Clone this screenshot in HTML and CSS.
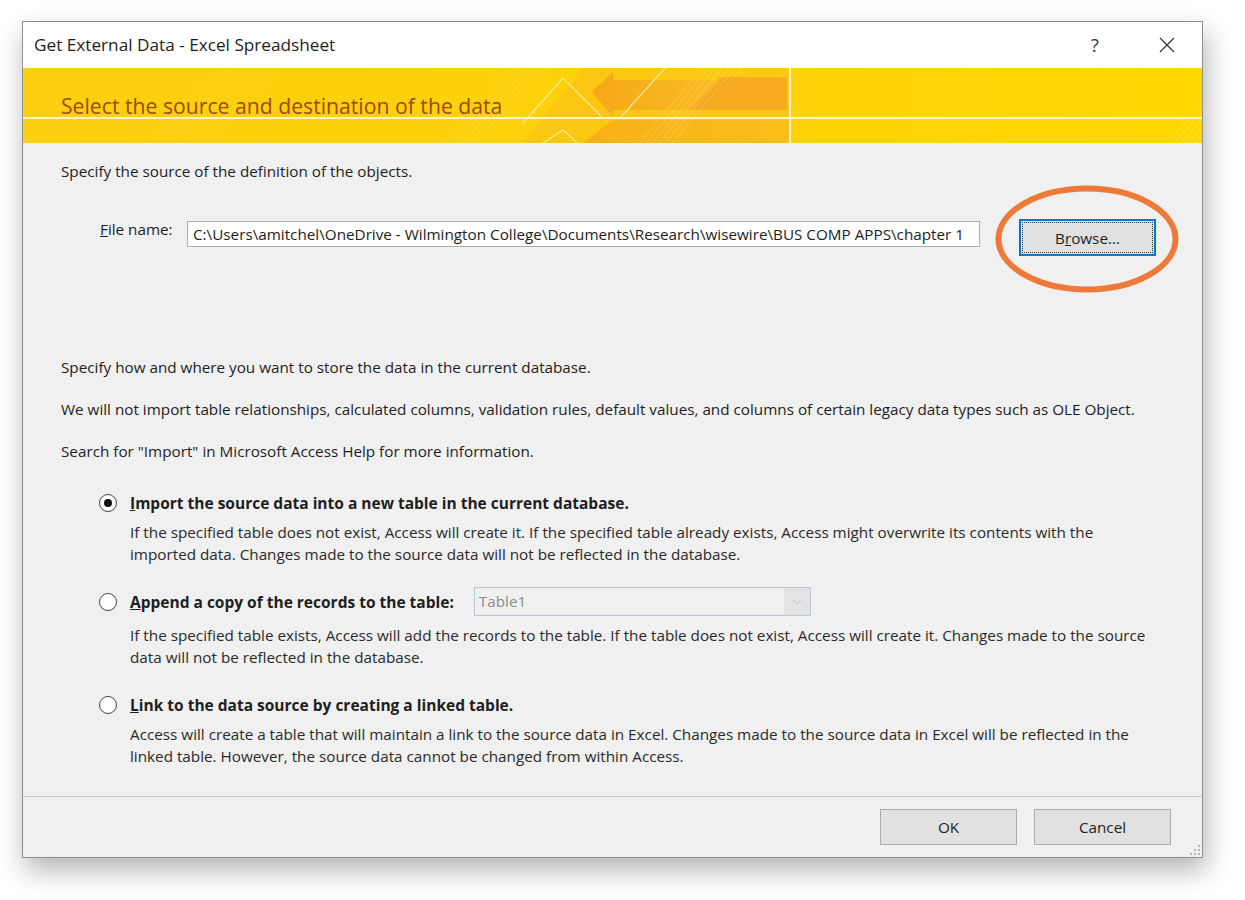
FILE: index.html
```html
<!DOCTYPE html>
<html lang="en">

<head>
  <meta charset="UTF-8">
  <title>Get External Data - Excel Spreadsheet</title>
  <link rel="stylesheet" href="styles.css">
</head>

<body>
  <div class="dialog">
    <div class="titlebar">
      <span class="title">Get External Data - Excel Spreadsheet</span>
      <div class="title-buttons">
        <span class="help">?</span>
        <span class="close">
          <svg width="16" height="16" viewBox="0 0 16 16"><path d="M1 1L15 15M15 1L1 15" stroke="#333" stroke-width="1.2" fill="none"/></svg>
        </span>
      </div>
    </div>

    <div class="banner">
      <svg class="banner-art" viewBox="0 0 1179 75" preserveAspectRatio="none">
        <defs>
          <linearGradient id="bannerBg" x1="0" x2="1" y1="0" y2="0">
            <stop offset="0" stop-color="#fccf10"/>
            <stop offset="0.5" stop-color="#fdd10a"/>
            <stop offset="1" stop-color="#ffd700"/>
          </linearGradient>
          <linearGradient id="orange" x1="0" x2="1" y1="0" y2="0">
            <stop offset="0" stop-color="#f5a01c"/>
            <stop offset="1" stop-color="#f9b825"/>
          </linearGradient>
          <pattern id="hatch" width="5" height="5" patternUnits="userSpaceOnUse" patternTransform="rotate(40)">
            <line x1="0" y1="0" x2="0" y2="5" stroke="#fff" stroke-width="1"/>
          </pattern>
        </defs>
        <rect width="1179" height="75" fill="url(#bannerBg)"/>
        <polygon points="120,75 190,0 260,0 190,75" fill="url(#hatch)" opacity="0.12"/>
        <polygon points="420,75 490,0 530,0 460,75" fill="url(#hatch)" opacity="0.25"/>
        <polygon points="500,75 560,0 767,0 767,75" fill="#f9bd1c" opacity="0.5"/>
        <polygon points="569,24 590,4 590,12 690,12 690,42 590,42 590,49" fill="url(#orange)" opacity="0.8"/>
        <polygon points="667,42 697,9 764,9 764,42" fill="#f5a722" opacity="0.9"/>
        <polygon points="560,75 590,52 767,52 767,75" fill="url(#orange)" opacity="0.6"/>
        <polygon points="610,75 680,0 720,0 650,75" fill="url(#hatch)" opacity="0.35"/>
        <polygon points="1140,75 1179,30 1179,75" fill="url(#hatch)" opacity="0.35"/>
        <g stroke="#fff3b0" stroke-width="1.2" fill="none" opacity="0.85">
          <polyline points="500,55 540,10 580,50"/>
          <line x1="597" y1="50" x2="642" y2="0"/>
          <polyline points="520,75 540,62 554,75"/>
        </g>
        <line x1="0" y1="50" x2="1179" y2="50" stroke="#fff6c4" stroke-width="2"/>
        <line x1="767" y1="0" x2="767" y2="75" stroke="#fff6c4" stroke-width="2"/>
      </svg>
      <h1 class="banner-title">Select the source and destination of the data</h1>
    </div>

    <div class="content">
      <p class="line">Specify the source of the definition of the objects.</p>

      <div class="file-row">
        <label class="file-label"><u>F</u>ile name:</label>
        <div class="file-input">C:\Users\amitchel\OneDrive - Wilmington College\Documents\Research\wisewire\BUS COMP APPS\chapter 1</div>
        <div class="browse-wrap">
          <button class="btn btn-browse">B<u>r</u>owse...</button>
          <svg class="ring" width="190" height="114" viewBox="0 0 190 114">
            <ellipse cx="95" cy="57" rx="88.5" ry="50.5" fill="none" stroke="#ee7a3a" stroke-width="6"/>
          </svg>
        </div>
      </div>

      <p class="line gap-large">Specify how and where you want to store the data in the current database.</p>
      <p class="line gap">We will not import table relationships, calculated columns, validation rules, default values, and columns of certain legacy data types such as OLE Object.</p>
      <p class="line gap">Search for "Import" in Microsoft Access Help for more information.</p>

      <div class="options">
        <div class="option">
          <div class="option-row">
            <span class="radio checked"></span>
            <span class="option-label"><u>I</u>mport the source data into a new table in the current database.</span>
          </div>
          <p class="option-desc">If the specified table does not exist, Access will create it. If the specified table already exists, Access might overwrite its contents with the<br>imported data. Changes made to the source data will not be reflected in the database.</p>
        </div>

        <div class="option">
          <div class="option-row">
            <span class="radio"></span>
            <span class="option-label"><u>A</u>ppend a copy of the records to the table:</span>
            <div class="combo">
              <span class="combo-text">Table1</span>
              <span class="combo-arrow">
                <svg width="10" height="6" viewBox="0 0 10 6"><path d="M1 1L5 5L9 1" stroke="#c4c4c4" stroke-width="1" fill="none"/></svg>
              </span>
            </div>
          </div>
          <p class="option-desc desc-wide">If the specified table exists, Access will add the records to the table. If the table does not exist, Access will create it. Changes made to the source<br>data will not be reflected in the database.</p>
        </div>

        <div class="option">
          <div class="option-row">
            <span class="radio"></span>
            <span class="option-label"><u>L</u>ink to the data source by creating a linked table.</span>
          </div>
          <p class="option-desc">Access will create a table that will maintain a link to the source data in Excel. Changes made to the source data in Excel will be reflected in the<br>linked table. However, the source data cannot be changed from within Access.</p>
        </div>
      </div>
    </div>

    <div class="footer">
      <button class="btn">OK</button>
      <button class="btn">Cancel</button>
      <svg class="grip" width="12" height="12" viewBox="0 0 12 12">
        <g fill="#b8b8b8">
          <rect x="9" y="1" width="2" height="2"/>
          <rect x="5" y="5" width="2" height="2"/><rect x="9" y="5" width="2" height="2"/>
          <rect x="1" y="9" width="2" height="2"/><rect x="5" y="9" width="2" height="2"/><rect x="9" y="9" width="2" height="2"/>
        </g>
      </svg>
    </div>
  </div>
</body>

</html>
```

FILE: styles.css
```css
body {
  margin: 0;
  min-height: 900px;
  background: #fff;
  font-family: "Open Sans", "Noto Sans", sans-serif;
  color: #1e1e1e;
}

.dialog {
  box-sizing: border-box;
  width: 1181px;
  height: 837px;
  margin: 21px 0 0 22px;
  border: 1px solid #8f8f8f;
  background: #f0f0f0;
  display: flex;
  flex-direction: column;
  box-shadow: 3px 12px 26px rgba(0, 0, 0, 0.3);
}

.titlebar {
  height: 46px;
  flex: none;
  background: #fff;
  display: flex;
  align-items: center;
  justify-content: space-between;
  padding-left: 11px;
}

.title {
  font-size: 17.2px;
  margin-top: -1px;
}

.title-buttons {
  display: flex;
  align-items: center;
}

.help {
  width: 46px;
  text-align: center;
  font-size: 18px;
  color: #333;
}

.close {
  width: 46px;
  margin: 0 12px 0 26px;
  display: flex;
  justify-content: center;
}

.banner {
  height: 75px;
  flex: none;
  position: relative;
  overflow: hidden;
}

.banner-art {
  position: absolute;
  left: 0;
  top: 0;
  width: 100%;
  height: 100%;
}

.banner-title {
  position: relative;
  margin: 0;
  padding: 24px 0 0 38px;
  font-size: 21.2px;
  font-weight: normal;
  line-height: 28px;
  color: #9c4a0c;
}

.content {
  flex: 1;
  padding: 18px 38px 0;
  font-size: 15.25px;
}

.line {
  margin: 0;
  line-height: 20px;
  white-space: nowrap;
}

.gap {
  margin-top: 22px;
}

.gap-large {
  margin-top: 101px;
}

.file-row {
  display: flex;
  align-items: flex-start;
  margin: 38px 0 0 39px;
}

.file-label {
  width: 87px;
  line-height: 20px;
}

.file-input {
  box-sizing: border-box;
  width: 793px;
  height: 26px;
  margin-top: 2px;
  padding: 0 5px;
  background: #fff;
  border: 1px solid #adadad;
  line-height: 24px;
  white-space: nowrap;
  overflow: hidden;
}

.browse-wrap {
  position: relative;
  margin-left: 39px;
}

.btn {
  box-sizing: border-box;
  width: 137px;
  height: 36px;
  background: #e1e1e1;
  border: 1px solid #adadad;
  font-family: inherit;
  font-size: 15.25px;
  color: #1e1e1e;
  padding: 0;
}

.btn-browse {
  height: 37px;
  border: 2px solid #0078d7;
  outline: 1px dotted #333;
  outline-offset: -4px;
}

.ring {
  position: absolute;
  left: -27px;
  top: -37px;
  pointer-events: none;
}

.options {
  margin-top: 27px;
}

.option + .option {
  margin-top: 22px;
}

.option-row {
  display: flex;
  align-items: center;
  height: 29px;
  padding-left: 38px;
}

.radio {
  box-sizing: border-box;
  width: 18px;
  height: 18px;
  border: 1px solid #444;
  border-radius: 50%;
  background: #fff;
  display: flex;
  align-items: center;
  justify-content: center;
}

.radio.checked::after {
  content: "";
  width: 8px;
  height: 8px;
  border-radius: 50%;
  background: #111;
}

.option-label {
  margin-left: 13px;
  font-size: 15.5px;
  font-weight: bold;
}

.combo {
  box-sizing: border-box;
  display: flex;
  width: 337px;
  height: 29px;
  margin-left: 20px;
  border: 1px solid #bcc7d5;
  background: #f0f0f0;
}

.combo-text {
  flex: 1;
  padding-left: 4px;
  line-height: 27px;
  color: #8c8c8c;
}

.combo-arrow {
  width: 26px;
  background: #e3e3e3;
  display: flex;
  align-items: center;
  justify-content: center;
}

.option-desc {
  margin: 4px 0 0 69px;
  line-height: 22px;
  color: #2a2a2a;
  white-space: nowrap;
}

.desc-wide {
  margin-top: 8px;
}

.footer {
  position: relative;
  height: 61px;
  flex: none;
  box-sizing: border-box;
  border-top: 1px solid #c8c8c8;
  display: flex;
  justify-content: flex-end;
  gap: 17px;
  padding: 12px 31px 0 0;
}

.grip {
  position: absolute;
  right: 1px;
  bottom: 1px;
}
```
